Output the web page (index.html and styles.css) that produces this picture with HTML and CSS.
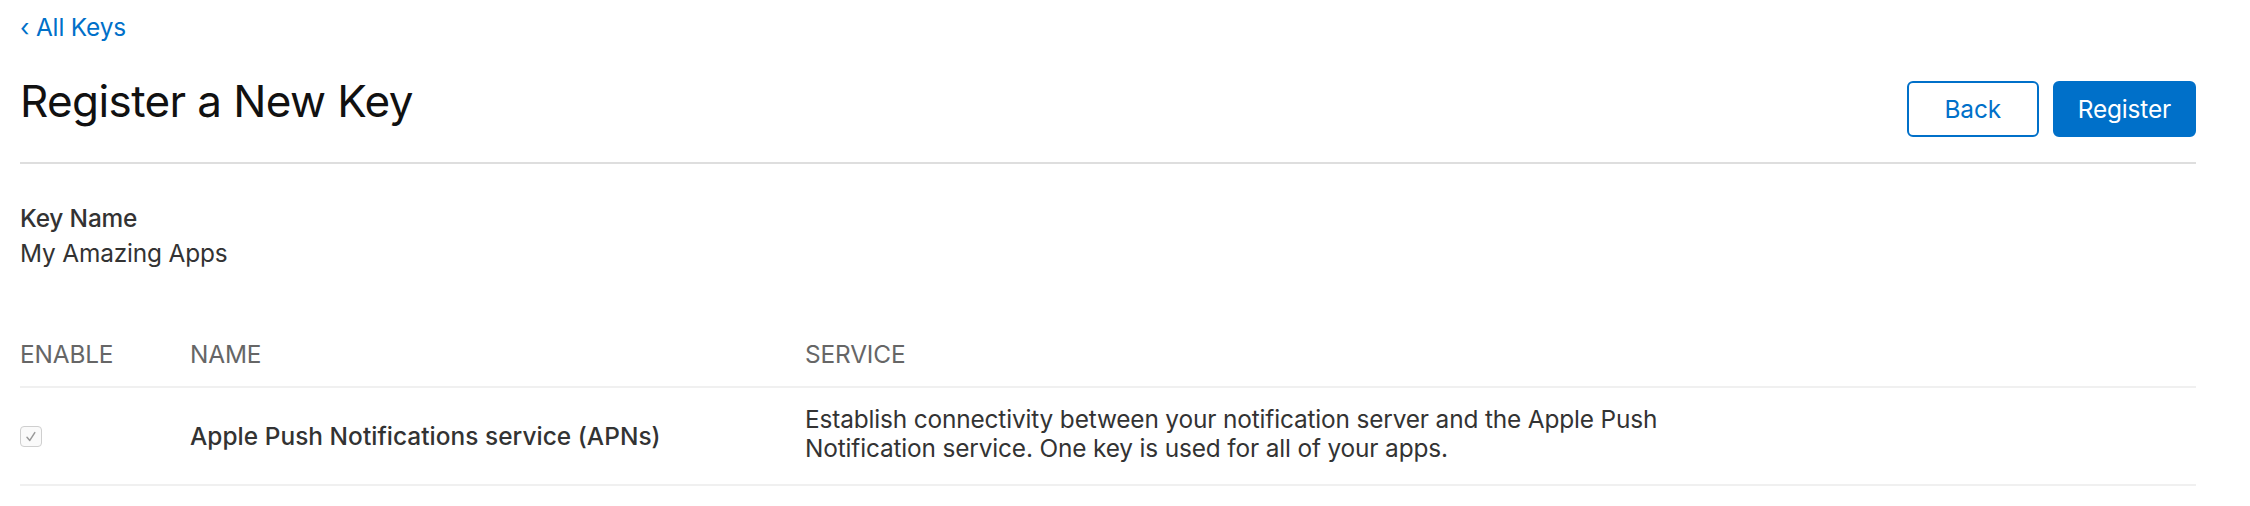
FILE: index.html
```html
<!DOCTYPE html>
<html lang="en">
<head>
<meta charset="utf-8">
<title>Register a New Key</title>
<link rel="stylesheet" href="styles.css">
</head>
<body>
<main class="page">
  <a class="back-link" href="#"><span class="chev">&#8249;</span> All Keys</a>
  <header class="page-header">
    <h1 class="page-title">Register a New Key</h1>
    <div class="actions">
      <button class="btn btn-secondary" type="button">Back</button>
      <button class="btn btn-primary" type="button">Register</button>
    </div>
  </header>

  <section class="field">
    <div class="field-label">Key Name</div>
    <div class="field-value">My Amazing Apps</div>
  </section>

  <section class="services">
    <div class="row row-head">
      <div class="cell">ENABLE</div>
      <div class="cell">NAME</div>
      <div class="cell">SERVICE</div>
    </div>
    <div class="row row-body">
      <div class="cell">
        <span class="checkbox">
          <svg viewBox="0 0 22 21" width="22" height="21" aria-hidden="true">
            <path d="M7 11.2 L9.8 14.4 L14.8 6.6" fill="none" stroke="#999999" stroke-width="1.5" stroke-linecap="round" stroke-linejoin="round"/>
          </svg>
        </span>
      </div>
      <div class="cell service-name">Apple Push Notifications service (APNs)</div>
      <div class="cell service-desc">Establish connectivity between your notification server and the Apple Push Notification service. One key is used for all of your apps.</div>
    </div>
  </section>
</main>
</body>
</html>
```

FILE: styles.css
```css
* { box-sizing: border-box; }

html, body {
  margin: 0;
  background: #ffffff;
}

body {
  font-family: Inter, "Noto Sans", "Liberation Sans", sans-serif;
  font-size: 24.4px;
  letter-spacing: -0.15px;
  color: #333333;
}

.page {
  padding: 10px 54px 0 20px;
}

.back-link {
  display: block;
  line-height: 34px;
  height: 34px;
  color: #0070c9;
  text-decoration: none;
}

.chev {
  display: inline-block;
}

.page-header {
  margin-top: 29px;
  display: flex;
  justify-content: space-between;
  align-items: flex-start;
  padding-bottom: 25px;
  border-bottom: 2px solid #dedede;
}

.page-title {
  margin: 0;
  font-size: 44px;
  line-height: 56px;
  font-weight: 400;
  letter-spacing: -0.6px;
  color: #111111;
}

.actions {
  display: flex;
  gap: 14px;
  margin-top: 8px;
}

.btn {
  height: 56px;
  min-width: 132px;
  padding: 0 23px;
  border-radius: 6px;
  font-family: inherit;
  font-size: 24.4px;
  letter-spacing: -0.15px;
  border: 2px solid #0070c9;
  cursor: pointer;
}

.btn-secondary {
  background: #ffffff;
  color: #0070c9;
}

.btn-primary {
  background: #0070c9;
  color: #ffffff;
}

.field {
  margin-top: 37px;
  line-height: 35px;
}

.field-label {
  font-weight: 500;
  color: #333333;
}

.field-value {
  color: #333333;
}

.services {
  margin-top: 66px;
}

.row {
  display: grid;
  grid-template-columns: 170px 615px 1fr;
  align-items: center;
}

.row-head {
  line-height: 35px;
  color: #666666;
  padding-bottom: 14px;
  border-bottom: 2px solid #f0f0f0;
}

.row-body {
  height: 98px;
  border-bottom: 2px solid #f0f0f0;
}

.checkbox {
  display: block;
  width: 22px;
  height: 21px;
  border: 1px solid #cfcfcf;
  border-radius: 4px;
  background: #fafafa;
  position: relative;
}

.checkbox svg {
  position: absolute;
  left: -1px;
  top: -1px;
}

.service-name {
  font-weight: 500;
  letter-spacing: 0.05px;
  color: #333333;
}

.service-desc {
  line-height: 28.7px;
  max-width: 900px;
  padding-bottom: 5px;
}
```
